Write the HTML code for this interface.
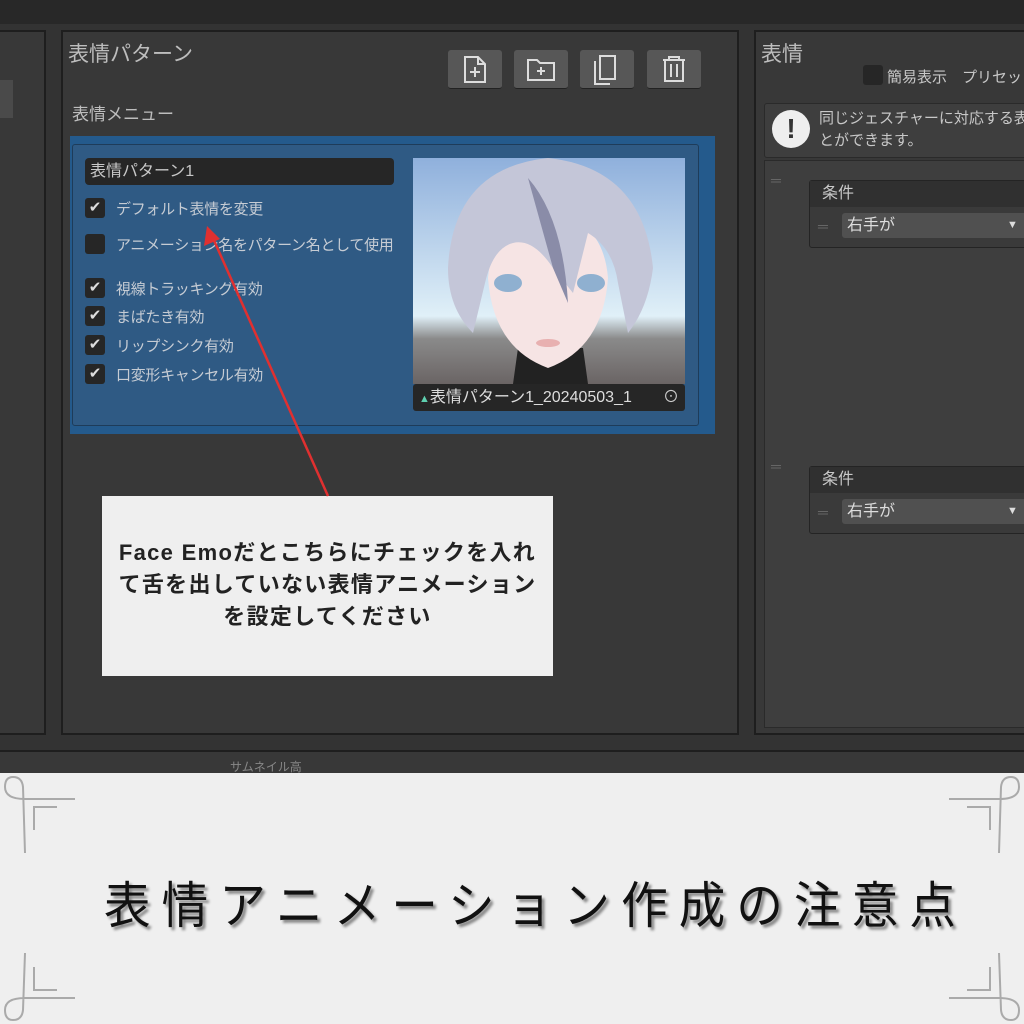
<!DOCTYPE html>
<html><head><meta charset="utf-8"><style>
*{margin:0;padding:0;box-sizing:border-box}
body{width:1024px;height:1024px;overflow:hidden;background:#2a2a2a;font-family:"Liberation Sans","Noto Sans CJK JP",sans-serif;position:relative;color:#c8c8c8}
.a{position:absolute}
.panel{position:absolute;background:#383838;border:2px solid #1e1e1e}
.cb{position:absolute;width:20px;height:20px;background:#262626;border-radius:3px;color:#ddd;font-size:15px;line-height:20px;text-align:center}
.lbl{position:absolute;font-size:15px;color:#c6ccd4;white-space:nowrap;letter-spacing:-0.3px}
.btn{position:absolute;top:50px;width:54px;height:39px;background:#575757;border-radius:3px;border-bottom:1px solid #222}
</style></head><body>
<div class="a" style="left:0;top:0;width:1024px;height:24px;background:#282828"></div>
<div class="a" style="left:0;top:24px;width:1024px;height:726px;background:#333"></div>
<div class="panel" style="left:-4px;top:30px;width:50px;height:705px"></div>
<div class="a" style="left:0;top:80px;width:13px;height:38px;background:#4a4a4a"></div>
<div class="panel" style="left:61px;top:30px;width:678px;height:705px"></div>
<div class="panel" style="left:754px;top:30px;width:280px;height:705px"></div>
<div class="a" style="left:0;top:750px;width:1024px;height:24px;background:#383838;border-top:2px solid #1e1e1e"></div>
<div class="a" style="left:230px;top:758px;font-size:12px;color:#888">サムネイル高</div>

<div class="a" style="left:68px;top:38px;font-size:21px;color:#bdbdbd">表情パターン</div>
<div class="a" style="left:72px;top:100px;font-size:17px;color:#bdbdbd">表情メニュー</div>
<div class="btn" style="left:448px"><svg width="54" height="39"><path d="M17 7h13l7 7v18h-20z M30 7v7h7" fill="none" stroke="#ddd" stroke-width="2"/><path d="M27 17v10M22 22h10" stroke="#ddd" stroke-width="2"/></svg></div>
<div class="btn" style="left:514px"><svg width="54" height="39"><path d="M14 10h9l3 3h14v17h-26z" fill="none" stroke="#ddd" stroke-width="2"/><path d="M27 17v8M23 21h8" stroke="#ddd" stroke-width="2"/></svg></div>
<div class="btn" style="left:580px"><svg width="54" height="39"><path d="M20 6h15v23h-15z M15 11v23h15" fill="none" stroke="#ddd" stroke-width="2"/></svg></div>
<div class="btn" style="left:647px"><svg width="54" height="39"><path d="M16 10h22M22 10v-3h10v3 M18 10v21h18v-21 M24 14v13M30 14v13" fill="none" stroke="#ddd" stroke-width="2"/></svg></div>

<div class="a" style="left:70px;top:136px;width:645px;height:298px;background:#245a8c"></div>
<div class="a" style="left:72px;top:144px;width:627px;height:282px;background:#2f5a84;border:1px solid #1e3c5a;border-radius:3px"></div>
<div class="a" style="left:85px;top:158px;width:309px;height:27px;background:#262626;border-radius:4px;font-size:16px;line-height:27px;padding-left:5px;color:#c8c8c8">表情パターン1</div>
<div class="cb" style="left:85px;top:198px">✔</div><div class="lbl" style="left:116px;top:198px">デフォルト表情を変更</div>
<div class="cb" style="left:85px;top:234px"></div><div class="lbl" style="left:116px;top:234px">アニメーション名をパターン名として使用</div>
<div class="cb" style="left:85px;top:278px">✔</div><div class="lbl" style="left:116px;top:278px">視線トラッキング有効</div>
<div class="cb" style="left:85px;top:306px">✔</div><div class="lbl" style="left:116px;top:306px">まばたき有効</div>
<div class="cb" style="left:85px;top:335px">✔</div><div class="lbl" style="left:116px;top:335px">リップシンク有効</div>
<div class="cb" style="left:85px;top:364px">✔</div><div class="lbl" style="left:116px;top:364px">口変形キャンセル有効</div>

<svg class="a" style="left:413px;top:158px" width="272" height="226">
<defs><linearGradient id="sky" x1="0" y1="0" x2="0" y2="1"><stop offset="0" stop-color="#8fb0dc"/><stop offset="0.7" stop-color="#e0f0f8"/><stop offset="0.8" stop-color="#8a8a8a"/><stop offset="1" stop-color="#6a6464"/></linearGradient></defs>
<rect width="272" height="226" fill="url(#sky)"/>
<path d="M100 226 L105 190 L170 190 L175 226z" fill="#222"/>
<path d="M75 120 Q80 190 135 210 Q190 190 195 120 Q190 60 135 55 Q80 60 75 120z" fill="#f6e4e4"/>
<path d="M35 110 Q40 10 135 0 Q230 10 240 110 Q235 150 215 175 L205 125 Q200 90 175 75 L160 135 L140 110 Q120 80 100 85 Q80 90 72 125 L60 175 Q35 150 35 110z" fill="#c4c6d8"/>
<path d="M115 20 Q150 60 155 145 L140 110z" fill="#8a8ca8"/>
<ellipse cx="95" cy="125" rx="14" ry="9" fill="#8fb0d0"/><ellipse cx="178" cy="125" rx="14" ry="9" fill="#8fb0d0"/>
<ellipse cx="135" cy="185" rx="12" ry="4" fill="#e8b0b0"/>
</svg>
<div class="a" style="left:413px;top:384px;width:272px;height:27px;background:#262626;border-radius:3px;font-size:16px;line-height:27px;color:#ddd;white-space:nowrap;overflow:hidden;padding-left:6px"><span style="color:#5fd0b0;font-size:11px">▲</span>表情パターン1_20240503_1<span style="position:absolute;right:6px;color:#ccc">⊙</span></div>

<div class="a" style="left:761px;top:38px;font-size:21px;color:#bdbdbd">表情</div>
<div class="a" style="left:863px;top:65px;width:20px;height:20px;background:#262626;border-radius:3px"></div>
<div class="a" style="left:887px;top:66px;font-size:15px;color:#c8c8c8;white-space:nowrap">簡易表示　プリセット</div>
<div class="a" style="left:764px;top:103px;width:270px;height:55px;background:#3e3e3e;border:1px solid #2a2a2a;border-radius:3px"></div>
<div class="a" style="left:772px;top:110px;width:38px;height:38px;border-radius:50%;background:#eee;color:#333;font-weight:bold;font-size:28px;text-align:center;line-height:38px">!</div>
<div class="a" style="left:819px;top:108px;font-size:15px;line-height:22px;color:#c8c8c8;white-space:nowrap">同じジェスチャーに対応する表<br>とができます。</div>
<div class="a" style="left:764px;top:160px;width:270px;height:568px;background:#3e3e3e;border:1px solid #2a2a2a"></div>
<div class="a" style="left:771px;top:172px;font-size:14px;color:#666">═</div>
<div class="a" style="left:809px;top:180px;width:230px;height:68px;background:#3a3a3a;border:1px solid #242424;border-radius:3px"></div>
<div class="a" style="left:810px;top:181px;width:230px;height:26px;background:#303030;font-size:16px;line-height:26px;padding-left:12px;color:#c8c8c8">条件</div>
<div class="a" style="left:818px;top:218px;font-size:14px;color:#666">═</div>
<div class="a" style="left:842px;top:213px;width:190px;height:25px;background:#505050;border-radius:3px;font-size:16px;line-height:25px;padding-left:5px;color:#ddd">右手が<span style="position:absolute;left:165px;font-size:11px">▼</span></div>
<div class="a" style="left:771px;top:458px;font-size:14px;color:#666">═</div>
<div class="a" style="left:809px;top:466px;width:230px;height:68px;background:#3a3a3a;border:1px solid #242424;border-radius:3px"></div>
<div class="a" style="left:810px;top:467px;width:230px;height:26px;background:#303030;font-size:16px;line-height:26px;padding-left:12px;color:#c8c8c8">条件</div>
<div class="a" style="left:818px;top:504px;font-size:14px;color:#666">═</div>
<div class="a" style="left:842px;top:499px;width:190px;height:25px;background:#505050;border-radius:3px;font-size:16px;line-height:25px;padding-left:5px;color:#ddd">右手が<span style="position:absolute;left:165px;font-size:11px">▼</span></div>

<div class="a" style="left:102px;top:496px;width:451px;height:180px;background:#efefef;color:#222;font-weight:bold;font-size:22px;letter-spacing:1.3px;line-height:32px;text-align:center;padding-top:41px;white-space:nowrap">Face Emoだとこちらにチェックを入れ<br>て舌を出していない表情アニメーション<br>を設定してください</div>
<svg class="a" style="left:0;top:0" width="1024" height="1024"><path d="M328 496L212 236" stroke="#e03030" stroke-width="2.5"/><path d="M207 226L204 246L220 239z" fill="#e03030"/></svg>

<div class="a" style="left:0;top:773px;width:1024px;height:251px;background:#efefef"></div>
<svg class="a" style="left:0;top:773px" width="1024" height="251" fill="none" stroke="#aaa" stroke-width="2">
<path d="M75 26H25Q5 26 5 14Q5 4 13 4Q22 4 23 14L25 80"/><path d="M57 34H34V57"/>
<path d="M949 26H999Q1019 26 1019 14Q1019 4 1011 4Q1002 4 1001 14L999 80"/><path d="M967 34H990V57"/>
<path d="M75 225H25Q5 225 5 237Q5 247 13 247Q22 247 23 237L25 180"/><path d="M57 217H34V194"/>
<path d="M949 225H999Q1019 225 1019 237Q1019 247 1011 247Q1002 247 1001 237L999 180"/><path d="M967 217H990V194"/>
</svg>
<div class="a" style="left:104px;top:866px;font-size:50px;letter-spacing:12px;color:#111;white-space:nowrap;text-shadow:3px 3px 3px #888;transform:scaleX(0.93);transform-origin:left">表情アニメーション作成の注意点</div>
</body></html>
